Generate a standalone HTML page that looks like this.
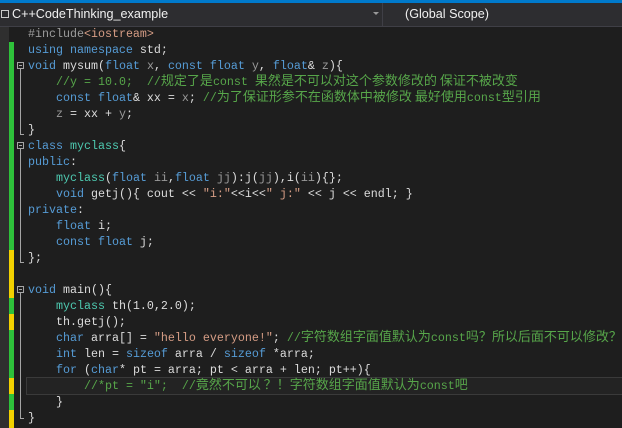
<!DOCTYPE html><html><head><meta charset="utf-8"><style>
body{margin:0;width:622px;height:428px;background:#1e1e1e;overflow:hidden;position:relative;font-family:"Liberation Mono",monospace}
.top{position:absolute;left:0;top:0;width:622px;height:3px;background:#007acc}
.hdr{position:absolute;left:0;top:3px;width:622px;height:23px;background:#2d2d30;border-bottom:1px solid #3f3f46;font-family:"Liberation Sans",sans-serif;font-size:12.6px;color:#f1f1f1}
.gut{position:absolute;left:0;top:27px;width:9px;height:401px;background:#2f2f2f}
.bar{position:absolute;left:9px;width:5px}
.ln{position:absolute;left:28px;height:16px;line-height:16px;font-size:11.67px;color:#dcdcdc;white-space:pre}
.c{font-family:"Noto Sans CJK SC",sans-serif;font-size:13px;line-height:8px}
.k{color:#569cd6}.t{color:#4ec9b0}.m{color:#57a64a}.s{color:#d69d85}.p{color:#9a9a9a}.pp{color:#9b9b9b}
.fb{position:absolute;left:17px;width:7px;height:7px;border:1px solid #a5a5a5;box-sizing:border-box}
.fb:after{content:"";position:absolute;left:1px;top:2px;width:3px;height:1px;background:#a5a5a5}
.gl{position:absolute;left:20px;width:1px;background:#a5a5a5}
.ge{position:absolute;left:20px;width:4px;height:1px;background:#a5a5a5}
</style></head><body>
<div class="top"></div>
<div class="hdr">
<div style="position:absolute;left:1px;top:7px;width:8px;height:8px;border:1px solid #ccc;box-sizing:border-box"></div>
<div style="position:absolute;left:12px;top:4px">C++CodeThinking_example</div>
<div style="position:absolute;left:373px;top:9px;width:0;height:0;border-left:3px solid transparent;border-right:3px solid transparent;border-top:3px solid #999"></div>
<div style="position:absolute;left:382px;top:0;width:1px;height:23px;background:#3f3f46"></div>
<div style="position:absolute;left:405px;top:4px">(Global Scope)</div>
</div>
<div class="gut"></div>
<div class="bar" style="top:42px;height:208px;background:#2ec13a"></div>
<div class="bar" style="top:250px;height:48px;background:#f2d100"></div>
<div class="bar" style="top:298px;height:16px;background:#2ec13a"></div>
<div class="bar" style="top:314px;height:16px;background:#f2d100"></div>
<div class="bar" style="top:330px;height:48px;background:#2ec13a"></div>
<div class="bar" style="top:378px;height:16px;background:#f2d100"></div>
<div class="bar" style="top:394px;height:16px;background:#2ec13a"></div>
<div class="bar" style="top:410px;height:18px;background:#f2d100"></div>
<div style="position:absolute;left:26px;top:377px;width:596px;height:16px;border:1px solid #3a3a3a;background:#232323"></div>
<div class="fb" style="top:62px"></div><div class="gl" style="top:69px;height:65px"></div><div class="ge" style="top:134px"></div>
<div class="fb" style="top:142px"></div><div class="gl" style="top:149px;height:113px"></div><div class="ge" style="top:262px"></div>
<div class="fb" style="top:286px"></div><div class="gl" style="top:293px;height:125px"></div><div class="ge" style="top:418px"></div>
<div class="ln" style="top:26px"><span class="pp">#include</span><span class="s">&lt;iostream&gt;</span></div>
<div class="ln" style="top:42px"><span class="k">using namespace</span> std;</div>
<div class="ln" style="top:58px"><span class="k">void</span> mysum(<span class="k">float</span> <span class="p">x</span>, <span class="k">const float</span> <span class="p">y</span>, <span class="k">float</span>&amp; <span class="p">z</span>){</div>
<div class="ln" style="top:74px">    <span class="m">//y = 10.0;  //<span class="c">规定了是</span>const <span class="c">果然是不可以对这个参数修改的 保证不被改变</span></span></div>
<div class="ln" style="top:90px">    <span class="k">const float</span>&amp; xx = <span class="p">x</span>; <span class="m">//<span class="c">为了保证形参不在函数体中被修改 最好使用</span>const<span class="c">型引用</span></span></div>
<div class="ln" style="top:106px">    <span class="p">z</span> = xx + <span class="p">y</span>;</div>
<div class="ln" style="top:122px">}</div>
<div class="ln" style="top:138px"><span class="k">class</span> <span class="t">myclass</span>{</div>
<div class="ln" style="top:154px"><span class="k">public</span>:</div>
<div class="ln" style="top:170px">    <span class="t">myclass</span>(<span class="k">float</span> <span class="p">ii</span>,<span class="k">float</span> <span class="p">jj</span>):j(<span class="p">jj</span>),i(<span class="p">ii</span>){};</div>
<div class="ln" style="top:186px">    <span class="k">void</span> getj(){ cout &lt;&lt; <span class="s">"i:"</span>&lt;&lt;i&lt;&lt;<span class="s">" j:"</span> &lt;&lt; j &lt;&lt; endl; }</div>
<div class="ln" style="top:202px"><span class="k">private</span>:</div>
<div class="ln" style="top:218px">    <span class="k">float</span> i;</div>
<div class="ln" style="top:234px">    <span class="k">const float</span> j;</div>
<div class="ln" style="top:250px">};</div>
<div class="ln" style="top:282px"><span class="k">void</span> main(){</div>
<div class="ln" style="top:298px">    <span class="t">myclass</span> th(1.0,2.0);</div>
<div class="ln" style="top:314px">    th.getj();</div>
<div class="ln" style="top:330px">    <span class="k">char</span> arra[] = <span class="s">"hello everyone!"</span>; <span class="m">//<span class="c">字符数组字面值默认为</span>const<span class="c">吗？所以后面不可以修改？</span></span></div>
<div class="ln" style="top:346px">    <span class="k">int</span> len = <span class="k">sizeof</span> arra / <span class="k">sizeof</span> *arra;</div>
<div class="ln" style="top:362px">    <span class="k">for</span> (<span class="k">char</span>* pt = arra; pt &lt; arra + len; pt++){</div>
<div class="ln" style="top:378px">        <span class="m">//*pt = "i";  //<span class="c">竟然不可以 ？！字符数组字面值默认为</span>const<span class="c">吧</span></span></div>
<div class="ln" style="top:394px">    }</div>
<div class="ln" style="top:410px">}</div>
</body></html>
